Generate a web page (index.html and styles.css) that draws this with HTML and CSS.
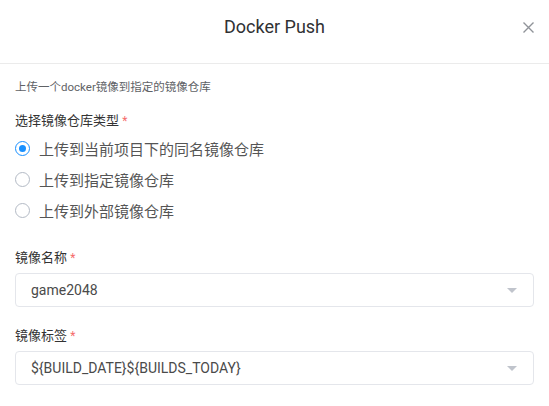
FILE: index.html
```html
<!DOCTYPE html>
<html lang="zh">
<head>
<meta charset="utf-8">
<link rel="stylesheet" href="styles.css">
</head>
<body>
<div class="dialog">
  <div class="header">
    <div class="title">Docker Push</div>
    <svg class="close" width="11" height="11" viewBox="0 0 11 11"><path d="M0.5 0.5 L10.5 10.5 M10.5 0.5 L0.5 10.5" stroke="#909399" stroke-width="1.4" fill="none"/></svg>
  </div>
  <div class="body">
    <div class="desc">上传一个docker镜像到指定的镜像仓库</div>
    <div class="label">选择镜像仓库类型 <span class="req">*</span></div>
    <div class="radios">
      <div class="radio"><span class="circle checked"></span><span>上传到当前项目下的同名镜像仓库</span></div>
      <div class="radio"><span class="circle"></span><span>上传到指定镜像仓库</span></div>
      <div class="radio"><span class="circle"></span><span>上传到外部镜像仓库</span></div>
    </div>
    <div class="label l2">镜像名称 <span class="req">*</span></div>
    <div class="select"><span>game2048</span><span class="caret"></span></div>
    <div class="label l3">镜像标签 <span class="req">*</span></div>
    <div class="select"><span>${BUILD_DATE}${BUILDS_TODAY}</span><span class="caret"></span></div>
  </div>
</div>
</body>
</html>
```

FILE: styles.css
```css
* { box-sizing: border-box; }
html, body { margin: 0; padding: 0; background: #fff; }
body {
  font-family: Roboto, "Noto Sans CJK SC", sans-serif;
  color: #333;
  width: 549px;
  height: 406px;
  overflow: hidden;
}
.header {
  position: relative;
  height: 64px;
  border-bottom: 1px solid #ebebeb;
  display: flex;
  align-items: center;
  justify-content: center;
  padding-bottom: 10px;
}
.title {
  font-size: 18px;
  color: #303133;
  line-height: 24px;
}
.close {
  position: absolute;
  right: 15px;
  top: 22px;
}
.body { padding: 0 15px; }
.desc {
  margin-top: 13px;
  font-size: 11.5px;
  line-height: 20px;
  color: #606266;
}
.label {
  margin-top: 14px;
  font-size: 13px;
  line-height: 20px;
  color: #333;
}
.req { color: #f56c6c; font-size: 12px; }
.radios { margin-top: 2px; }
.radio {
  height: 31px;
  display: flex;
  align-items: center;
  gap: 9px;
  font-size: 15px;
  color: #555;
}
.circle {
  width: 15px;
  height: 15px;
  border: 1px solid #b3bac5;
  border-radius: 50%;
  flex: none;
  position: relative;
}
.circle.checked { border-color: #1890ff; }
.circle.checked::after {
  content: "";
  position: absolute;
  left: 3px; top: 3px;
  width: 7px; height: 7px;
  border-radius: 50%;
  background: #1890ff;
}
.label.l2 { margin-top: 22px; }
.label.l3 { margin-top: 19px; }
.select {
  margin-top: 5px;
  height: 34px;
  border: 1px solid #e4e6eb;
  border-radius: 4px;
  display: flex;
  align-items: center;
  justify-content: space-between;
  padding: 0 16px 0 15px;
  font-size: 14px;
  color: #4a4a4a;
}
.caret {
  width: 0; height: 0;
  border-left: 5px solid transparent;
  border-right: 5px solid transparent;
  border-top: 5px solid #c0c4cc;
}
```
